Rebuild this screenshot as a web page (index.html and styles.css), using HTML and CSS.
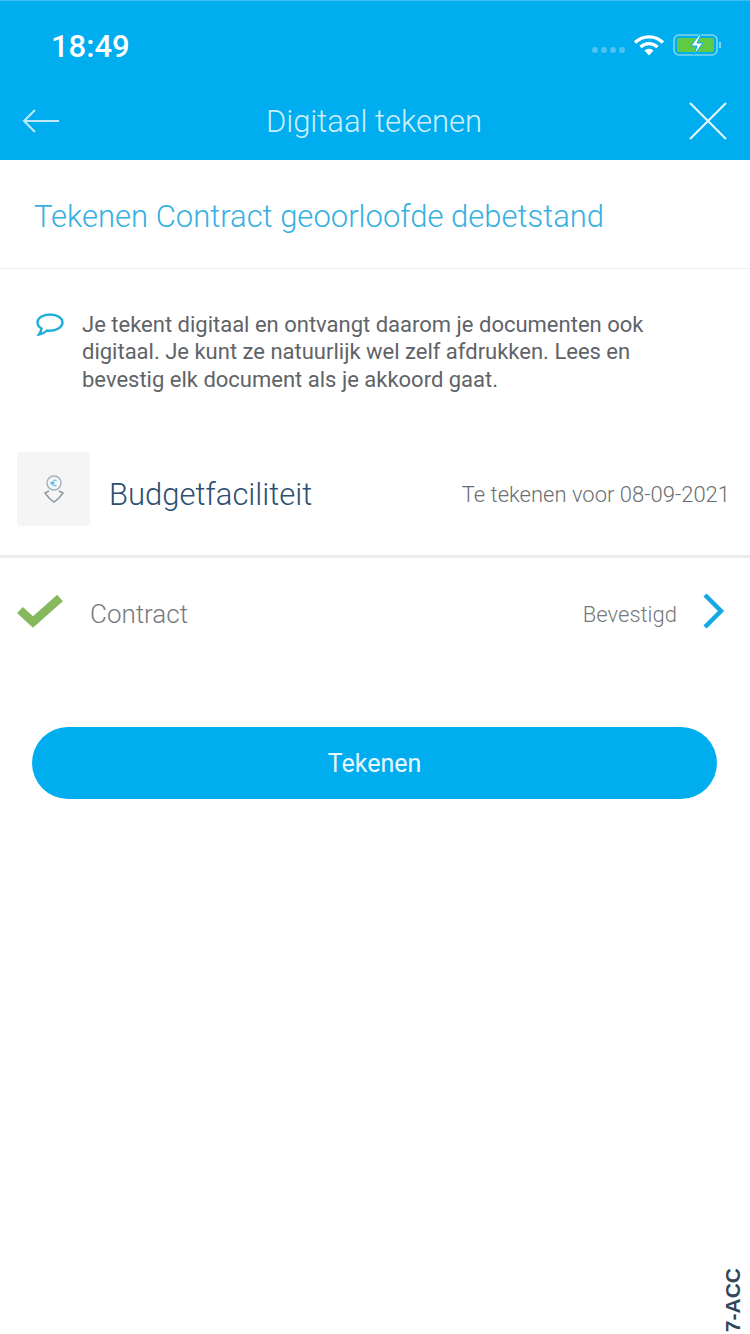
FILE: index.html
```html
<!DOCTYPE html>
<html lang="nl">
<head>
<meta charset="utf-8">
<title>Digitaal tekenen</title>
<link rel="stylesheet" href="styles.css">
</head>
<body>
<div class="screen">
  <header class="header">
    <div class="status">
      <span class="time">18:49</span>
      <div class="status-icons">
        <span class="dots"><i></i><i></i><i></i><i></i></span>
        <svg class="wifi" width="32" height="22" viewBox="0 0 32 22"><path d="M2 8.500C10 1 22 1 30 8.500" fill="none" stroke="#fff" stroke-width="3.400"/><path d="M7.500 13C12.500 8.500 19.500 8.500 24.500 13" fill="none" stroke="#fff" stroke-width="3.400"/><path d="M11.500 16.500C14.500 14 17.500 14 20.500 16.500L16 21.500Z" fill="#fff"/></svg>
        <svg class="battery" width="50" height="24" viewBox="0 0 50 24"><rect x="1" y="2" width="43" height="20" rx="5" fill="none" stroke="#7fd6ee" stroke-width="1.600"/><rect x="4" y="5" width="37" height="14" rx="2" fill="#5fcb45"/><path d="M47 9v6" stroke="#7fd6ee" stroke-width="2"/><path d="M26 2l-8 11h6l-3 9 9-12h-6l4-8z" fill="#fff" stroke="#00adef" stroke-width="1"/></svg>
      </div>
    </div>
    <nav class="nav">
      <svg class="nav-icon" width="38" height="26" viewBox="0 0 38 26"><path d="M37 13H2M13 2L2 13l11 11" fill="none" stroke="#bfe9fa" stroke-width="2"/></svg>
      <h1 class="nav-title">Digitaal tekenen</h1>
      <svg class="nav-icon" width="40" height="40" viewBox="0 0 40 40"><path d="M2 2l36 36M38 2L2 38" fill="none" stroke="#eaf8fe" stroke-width="2"/></svg>
    </nav>
  </header>

  <section class="title-row">
    <h2 class="page-title">Tekenen Contract geoorloofde debetstand</h2>
  </section>

  <section class="intro">
    <svg class="bubble" width="30" height="26" viewBox="0 0 30 26"><path d="M15 2.500C8 2.500 2.500 6 2.500 10.500c0 2.500 1.500 4.500 4 6-.3 2-1 4-2.500 6 3.500-.5 6-2 8-4 1 .2 2 .2 3 .2 7 0 12.500-3.700 12.500-8.200S22 2.500 15 2.500z" fill="none" stroke="#1eaede" stroke-width="2.400"/></svg>
    <p class="intro-text">Je tekent digitaal en ontvangt daarom je documenten ook digitaal. Je kunt ze natuurlijk wel zelf afdrukken. Lees en bevestig elk document als je akkoord gaat.</p>
  </section>

  <section class="product">
    <div class="product-icon">
      <svg width="24" height="30" viewBox="0 0 24 30"><circle cx="12" cy="9" r="7" fill="none" stroke="#9fb4bd" stroke-width="1.500"/><path d="M14.500 6.500c-2-1-4-.2-4 2.500s2 3.500 4 2.500M8.500 8.500h4M8.500 10h4" fill="none" stroke="#45b4e0" stroke-width="1"/><path d="M7 17l-4 2 4 5 5 4 5-4 4-5-4-2" fill="none" stroke="#8a979e" stroke-width="1.500"/></svg>
    </div>
    <span class="product-name">Budgetfaciliteit</span>
    <span class="product-date">Te tekenen voor 08-09-2021</span>
  </section>

  <section class="doc-row">
    <svg class="check" width="46" height="36" viewBox="0 0 46 36"><path d="M3 17l13 12L43 5" fill="none" stroke="#86b95b" stroke-width="8.500"/></svg>
    <span class="doc-name">Contract</span>
    <span class="doc-status">Bevestigd</span>
    <svg class="chevron" width="24" height="38" viewBox="0 0 24 38"><path d="M3 3l16 16L3 35" fill="none" stroke="#12a9e4" stroke-width="4.500"/></svg>
  </section>

  <div class="action">
    <button class="primary" type="button">Tekenen</button>
  </div>

  <span class="stamp">7-ACC</span>
</div>
</body>
</html>
```

FILE: styles.css
```css
* { box-sizing: border-box; }
html, body { margin: 0; padding: 0; background: #fff; }
.screen {
  position: relative;
  width: 750px;
  height: 1334px;
  overflow: hidden;
  font-family: Roboto, "Liberation Sans", sans-serif;
  background: #fff;
}
.header { height: 160px; background: #00adef; border-top: 1px solid #3bbdf0; }
.status {
  height: 81px;
  display: flex;
  align-items: center;
  justify-content: space-between;
  padding: 9px 27px 0 51px;
}
.time { color: #fff; font-size: 31px; font-weight: 500; }
.status-icons { display: flex; align-items: center; gap: 8px; margin-top: -2px; }
.dots { display: flex; gap: 3px; margin-top: 10px; opacity: 0.7; }
.dots i { width: 6px; height: 6px; border-radius: 50%; background: #6fcdf2; }
.nav {
  height: 78px;
  display: flex;
  align-items: center;
  justify-content: space-between;
  padding: 0 22px;
}
.nav-title { margin: 0; color: #cdeffc; font-size: 31px; font-weight: 300; }
.title-row {
  height: 109px;
  display: flex;
  align-items: center;
  padding: 4px 34px 0;
  border-bottom: 1px solid #f0f0f0;
}
.page-title { margin: 0; color: #35b0e2; font-size: 31px; font-weight: 300; white-space: nowrap; }
.intro { display: flex; gap: 17px; padding: 42px 20px 0 35px; }
.bubble { flex: none; margin-top: 1px; }
.intro-text { margin: 0; color: #5f6368; font-size: 22px; line-height: 27.300px; width: 590px; }
.product {
  height: 124px;
  margin-top: 41.500px;
  display: flex;
  align-items: center;
  padding: 0 20px 0 17px;
  border-bottom: 3px solid #ececec;
}
.product-icon {
  width: 73px;
  height: 74px;
  align-self: flex-start;
  margin-top: 18px;
  display: flex;
  align-items: center;
  justify-content: center;
  background: #f5f5f6;
  border-radius: 4px;
}
.product-name { margin-left: 19px; color: #2d4f70; font-size: 31px; font-weight: 300; }
.product-date { margin-left: auto; color: #6b6f73; font-size: 22px; font-weight: 300; white-space: nowrap; }
.doc-row {
  height: 110px;
  display: flex;
  align-items: center;
  padding: 2px 24px 0 17px;
}
.check { margin-top: -6px; }
.doc-name { margin-left: 27px; color: #77797c; font-size: 26px; font-weight: 300; }
.doc-status { margin-left: auto; color: #77797c; font-size: 22px; font-weight: 300; }
.chevron { margin-left: 25px; margin-top: -6px; }
.action { padding: 59px 33px 0 32px; }
.primary {
  display: block;
  width: 100%;
  height: 72px;
  border: 0;
  border-radius: 36px;
  background: #00adef;
  color: #eaf8fe;
  font-family: inherit;
  font-size: 25px;
  font-weight: 400;
}
.stamp {
  position: absolute;
  right: 5px;
  bottom: 2px;
  writing-mode: vertical-rl;
  transform: rotate(180deg);
  color: #33475b;
  font-family: "Liberation Sans", sans-serif;
  font-size: 21px;
  font-weight: 700;
}
```
